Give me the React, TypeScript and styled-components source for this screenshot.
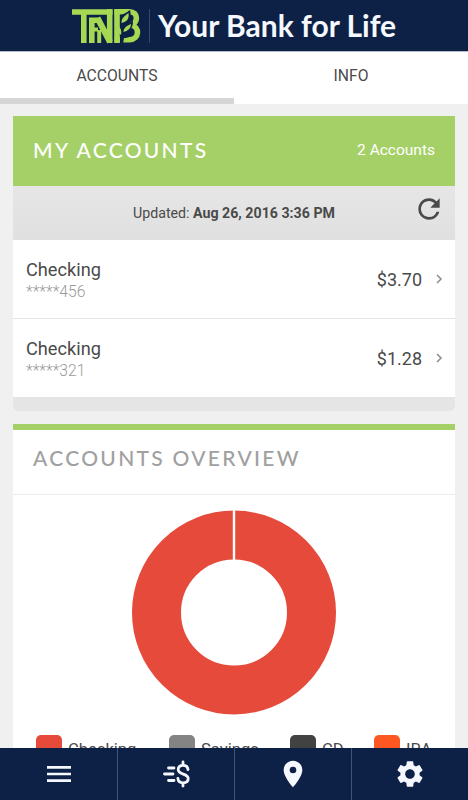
import * as React from 'react';
import styled, { createGlobalStyle } from 'styled-components';
import { MdLocationOn, MdMenu, MdRefresh, MdSettings } from 'react-icons/md';

const navy = '#0d2146';
const green = '#a5d067';

const GlobalStyle = createGlobalStyle`
  html,
  body {
    background: #f0f0f0;
    color: #4a4a4a;
    font-family: Roboto, 'Liberation Sans', sans-serif;
    margin: 0;
  }

  * {
    box-sizing: border-box;
  }
`;

const Page = styled.div`
  display: flex;
  flex-direction: column;
  height: 800px;
  overflow: hidden;
  width: 468px;
`;

const Header = styled.header`
  align-items: center;
  background: ${navy};
  border-bottom: 1px solid #b3bccb;
  display: flex;
  flex: none;
  height: 52px;
  padding-left: 71px;
`;

const Logo = styled.svg`
  display: block;
  flex: none;
`;

const Slogan = styled.div`
  border-left: 1px solid #34466a;
  color: #f5f9ff;
  font-family: Lato, sans-serif;
  font-size: 30px;
  font-weight: 700;
  line-height: 32px;
  margin-left: 8px;
  padding: 0 0 2px 8px;
  white-space: nowrap;
`;

const Tabs = styled.nav`
  display: flex;
  flex: none;
  height: 52px;
`;

const Tab = styled.div<{ $active?: boolean }>`
  background: #fff;
  border-bottom: 6px solid ${p => (p.$active ? '#d6d6d6' : '#fff')};
  flex: 1;
  font-size: 15.7px;
  line-height: 48px;
  text-align: center;
`;

const Content = styled.main`
  display: flex;
  flex: 1;
  flex-direction: column;
  gap: 13px;
  min-height: 0;
  overflow: hidden;
  padding: 12px 13px 0;
`;

const Card = styled.section`
  background: #fff;
  border-radius: 0 0 5px 5px;
  flex: none;
  overflow: hidden;
`;

const CardHeader = styled.div`
  align-items: center;
  background: ${green};
  color: #fff;
  display: flex;
  height: 70px;
  justify-content: space-between;
  padding: 0 20px 2px;
`;

const Title = styled.h2`
  font-family: Lato, sans-serif;
  font-size: 21px;
  font-weight: 500;
  letter-spacing: 2.3px;
  line-height: 26px;
  margin: 0;
`;

const Count = styled.span`
  font-size: 15.5px;
`;

const Updated = styled.div`
  align-items: center;
  background: linear-gradient(#e7e6e6, #e0e0e0);
  display: grid;
  font-size: 14.2px;
  grid-template-columns: 36px 1fr 36px;
  height: 54px;
  padding: 0 6px;
  text-align: center;

  svg {
    margin-top: -8px;
  }
`;

const Row = styled.div`
  align-items: center;
  display: flex;
  height: 78px;
  padding: 0 12px 0 13px;

  & + & {
    border-top: 1px solid #e4e4e4;
    height: 79px;
  }
`;

const Account = styled.div`
  flex: 1;
  font-size: 18.2px;
  line-height: 22px;
  padding-top: 3px;
`;

const Mask = styled.div`
  color: #9a9a9a;
  font-size: 15.7px;
  font-weight: 300;
  line-height: 21px;
`;

const Amount = styled.div`
  font-size: 18px;
`;

const Chevron = styled.svg`
  margin-left: 14px;
`;

const CardFooter = styled.div`
  background: #e5e5e5;
  height: 14px;
`;

const OverviewHeader = styled.div`
  border-bottom: 1px solid #ececec;
  border-top: 6px solid ${green};
  color: #a0a0a0;
  height: 71px;
  padding: 15px 20px;
`;

const Donut = styled.svg`
  display: block;
  margin: 15px auto 0;
`;

const Legend = styled.div`
  display: grid;
  grid-template-columns: 133px 121px 84px 1fr;
  margin-top: 18px;
  padding-left: 23px;
`;

const LegendItem = styled.div`
  align-items: center;
  display: flex;
  font-size: 16.6px;
  gap: 6px;
  height: 28px;
`;

const LegendLabel = styled.span`
  padding-top: 3px;
`;

const Swatch = styled.span<{ $color: string }>`
  background: ${p => p.$color};
  border-radius: 5px;
  height: 26px;
  width: 26px;
`;

const BottomNav = styled.nav`
  background: ${navy};
  display: grid;
  flex: none;
  grid-template-columns: repeat(4, 1fr);
  height: 52px;
`;

const NavItem = styled.div`
  align-items: center;
  color: #f5f9ff;
  display: flex;
  justify-content: center;

  & + & {
    border-left: 1px solid #43547a;
  }
`;

const accounts = [
  { name: 'Checking', mask: '*****456', amount: '$3.70' },
  { name: 'Checking', mask: '*****321', amount: '$1.28' },
];

const legend = [
  { label: 'Checking', color: '#e64a3b' },
  { label: 'Savings', color: '#848484' },
  { label: 'CD', color: '#424242' },
  { label: 'IRA', color: '#ff5722' },
];

// interlocking bars with a sprig of leaves cut into the right hand bowl
const BankLogo = () => (
  <Logo width="70" height="36" viewBox="0 0 70 36">
    <g fill="none" stroke="#a6d854" strokeWidth="5.6">
      <path d="M1 4h40.500M12.800 4v31" />
      <path d="M20.800 35v-25M18 12.200h10" />
      <path d="M20 21.500h7" strokeWidth="4" />
      <path d="M28.200 35v-13" strokeWidth="4" />
      <path d="M26.500 10l12.500 24" strokeWidth="6" />
      <path d="M38.700 35v-34" />
      <path d="M46 35v-34" />
      <path d="M43.500 3.800h15c9 0 9 11.500 1 13.200c10 1.500 9 14.800-1.500 14.800h-14.500" />
    </g>
    <path
      d="M49 7c3 0 7-3 10-5c2 7-1 12-6 15c4-1 6-3 9-4c0 7-3 10-7 12c3 0 4-1 6-1c-1 5-4 6-8 6l-1 6h-3z"
      fill={navy}
    />
    <path
      d="M50.500 15c0-5 3-7 7-10c1 6-2 9-7 10zM52.500 24c0-4 3-6 7.500-8c0 4-3 7-7.500 8zM50 27c-3-2-4-5-3-9c3 2 4 5 3 9z"
      fill="#a6d854"
    />
  </Logo>
);

const TransferIcon = () => (
  <svg
    width="30"
    height="28"
    viewBox="0 0 30 28"
    fill="none"
    stroke="currentColor"
    strokeWidth="2.8"
    strokeLinecap="round"
  >
    <path d="M7.500 8h5.500M3.500 14h8.500M7.500 20.500h5.500" />
    <path d="M27 9.500c-.3-2.800-2.200-4.200-4.900-4.200-3 0-4.900 1.700-4.900 4.200 0 5.700 10 3.400 10 9 0 2.700-2 4.300-5.100 4.300s-5.100-1.600-5.200-4.500M22 2v3M22 23v3" />
  </svg>
);

export default function App() {
  return (
    <>
      <GlobalStyle />
      <Page>
        <Header>
          <BankLogo />
          <Slogan>Your Bank for Life</Slogan>
        </Header>
        <Tabs>
          <Tab $active>ACCOUNTS</Tab>
          <Tab>INFO</Tab>
        </Tabs>
        <Content>
          <Card>
            <CardHeader>
              <Title>MY ACCOUNTS</Title>
              <Count>2 Accounts</Count>
            </CardHeader>
            <Updated>
              <span />
              <span>
                Updated: <b>Aug 26, 2016 3:36 PM</b>
              </span>
              <MdRefresh size={32} />
            </Updated>
            {accounts.map(a => (
              <Row key={a.mask}>
                <Account>
                  {a.name}
                  <Mask>{a.mask}</Mask>
                </Account>
                <Amount>{a.amount}</Amount>
                <Chevron width="7" height="10" viewBox="0 0 7 10">
                  <path
                    d="M1 1l4 4-4 4"
                    fill="none"
                    stroke="#8c8c8c"
                    strokeWidth="1.5"
                  />
                </Chevron>
              </Row>
            ))}
            <CardFooter />
          </Card>
          <Card>
            <OverviewHeader>
              <Title>ACCOUNTS OVERVIEW</Title>
            </OverviewHeader>
            <Donut width="206" height="206" viewBox="0 0 206 206">
              <circle
                cx="103"
                cy="102.500"
                r="77.500"
                fill="none"
                stroke="#e64a3b"
                strokeWidth="49"
              />
              <path d="M103 0v52" stroke="#fff" strokeWidth="2.4" />
            </Donut>
            <Legend>
              {legend.map(l => (
                <LegendItem key={l.label}>
                  <Swatch $color={l.color} />
                  <LegendLabel>{l.label}</LegendLabel>
                </LegendItem>
              ))}
            </Legend>
          </Card>
        </Content>
        <BottomNav>
          <NavItem>
            <MdMenu size={32} />
          </NavItem>
          <NavItem>
            <TransferIcon />
          </NavItem>
          <NavItem>
            <MdLocationOn size={32} />
          </NavItem>
          <NavItem>
            <MdSettings size={32} />
          </NavItem>
        </BottomNav>
      </Page>
    </>
  );
}
